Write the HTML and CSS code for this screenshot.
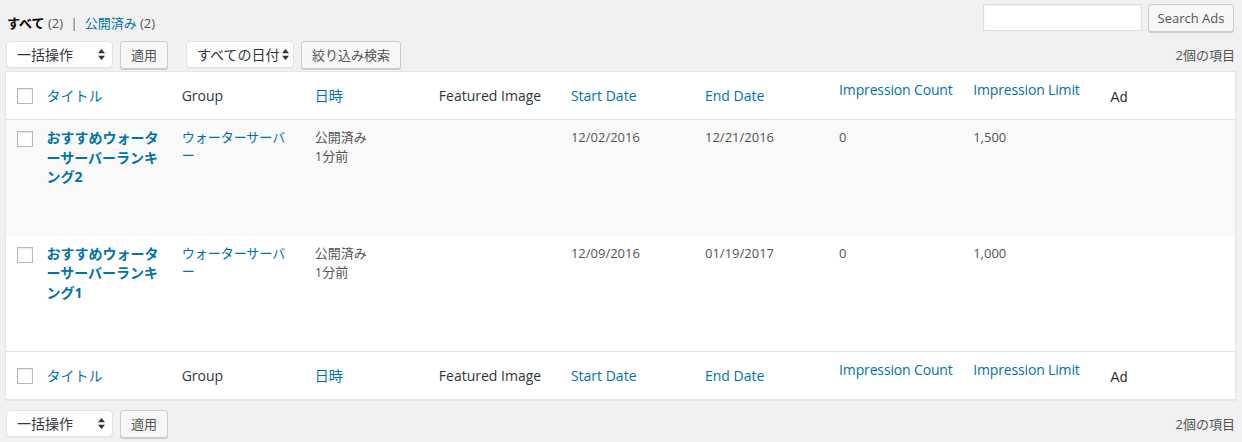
FILE: index.html
```html
<!DOCTYPE html>
<html lang="ja">
<head>
<meta charset="utf-8">
<title>Ads</title>
<link rel="stylesheet" href="styles.css">
</head>
<body>
<div class="top">
  <ul class="subsubsub">
    <li><span class="current">すべて</span> <span class="count">(2)</span> <span class="sep">|</span></li>
    <li><a class="link">公開済み</a> <span class="count">(2)</span></li>
  </ul>
  <div class="search">
    <input class="search-input" type="text">
    <span class="button btn-search">Search Ads</span>
  </div>
</div>

<div class="tablenav">
  <div class="actions">
    <div class="select sel-bulk"><span>一括操作</span><svg class="arr" width="7" height="11" viewBox="0 0 7 11"><path d="M3.5 0L7 4.3H0z M3.5 11L7 6.7H0z" fill="#333"/></svg></div>
    <span class="button">適用</span>
    <div class="select sel-date"><span>すべての日付</span><svg class="arr" width="7" height="11" viewBox="0 0 7 11"><path d="M3.5 0L7 4.3H0z M3.5 11L7 6.7H0z" fill="#333"/></svg></div>
    <span class="button">絞り込み検索</span>
  </div>
  <div class="items">2個の項目</div>
</div>

<table class="widefat">
  <colgroup>
    <col style="width:31px"><col style="width:135px"><col style="width:133px"><col style="width:124px"><col style="width:132px"><col style="width:134px"><col style="width:134px"><col style="width:134px"><col style="width:137px"><col style="width:135px">
  </colgroup>
  <thead>
    <tr>
      <td class="check"><span class="cb"></span></td>
      <th class="link">タイトル</th>
      <th>Group</th>
      <th class="link">日時</th>
      <th>Featured Image</th>
      <th class="link">Start Date</th>
      <th class="link">End Date</th>
      <th class="link top-al">Impression Count</th>
      <th class="link top-al">Impression Limit</th>
      <th class="ad">Ad</th>
    </tr>
  </thead>
  <tbody>
    <tr class="alt">
      <td class="check"><span class="cb"></span></td>
      <td class="title">おすすめウォーターサーバーランキング2</td>
      <td class="grp">ウォーターサーバー</td>
      <td>公開済み<br>1分前</td>
      <td></td>
      <td>12/02/2016</td>
      <td>12/21/2016</td>
      <td>0</td>
      <td>1,500</td>
      <td></td>
    </tr>
    <tr>
      <td class="check"><span class="cb"></span></td>
      <td class="title">おすすめウォーターサーバーランキング1</td>
      <td class="grp">ウォーターサーバー</td>
      <td>公開済み<br>1分前</td>
      <td></td>
      <td>12/09/2016</td>
      <td>01/19/2017</td>
      <td>0</td>
      <td>1,000</td>
      <td></td>
    </tr>
  </tbody>
  <tfoot>
    <tr>
      <td class="check"><span class="cb"></span></td>
      <th class="link">タイトル</th>
      <th>Group</th>
      <th class="link">日時</th>
      <th>Featured Image</th>
      <th class="link">Start Date</th>
      <th class="link">End Date</th>
      <th class="link top-al">Impression Count</th>
      <th class="link top-al">Impression Limit</th>
      <th class="ad">Ad</th>
    </tr>
  </tfoot>
</table>

<div class="tablenav bottom">
  <div class="actions">
    <div class="select sel-bulk"><span>一括操作</span><svg class="arr" width="7" height="11" viewBox="0 0 7 11"><path d="M3.5 0L7 4.3H0z M3.5 11L7 6.7H0z" fill="#333"/></svg></div>
    <span class="button">適用</span>
  </div>
  <div class="items">2個の項目</div>
</div>
</body>
</html>
```

FILE: styles.css
```css
* { box-sizing: border-box; }
html, body { margin: 0; padding: 0; }
body {
  background: #f1f1f1;
  font-family: "Open Sans", "Noto Sans CJK JP", sans-serif;
  font-size: 13px;
  color: #444;
  line-break: loose;
  width: 1242px;
  height: 442px;
  overflow: hidden;
}

.top {
  display: flex;
  justify-content: space-between;
  align-items: flex-start;
  height: 36px;
  padding: 4px 8px 0 7px;
}
.subsubsub {
  list-style: none;
  margin: 10px 0 0;
  padding: 0;
  display: flex;
  gap: 5px;
  line-height: 18px;
  font-size: 13px;
}
.subsubsub .current { color: #000; font-weight: 700; }
.subsubsub .count { color: #555; }
.subsubsub .sep { color: #666; margin: 0 2px 0 4px; }
.link { color: #0073aa; }

.search { display: flex; gap: 6px; align-items: flex-start; }
.search-input {
  width: 159px;
  height: 27px;
  border: 1px solid #ddd;
  background: #fff;
  box-shadow: inset 0 1px 2px rgba(0,0,0,.07);
  margin: 0;
  padding: 0;
  outline: none;
}

.button {
  display: inline-flex;
  align-items: center;
  height: 28px;
  padding: 0 10px 1px;
  background: #f7f7f7;
  border: 1px solid #ccc;
  border-radius: 3px;
  box-shadow: 0 1px 0 #ccc;
  color: #555;
  font-size: 13px;
  white-space: nowrap;
}
.btn-search { width: 86px; justify-content: center; padding: 0 0 1px; }

.tablenav {
  display: flex;
  justify-content: space-between;
  align-items: center;
  height: 28px;
  margin: 4px 0 3px;
  padding: 0 7px 0 6px;
}
.tablenav.bottom { margin-top: 9px; }
.actions { display: flex; align-items: center; }
.actions .button { margin-left: 7px; margin-top: 2px; }
.actions .button + .select { margin-left: 18px; }
.select {
  display: flex;
  align-items: center;
  justify-content: space-between;
  height: 27px;
  background: #fff;
  border: 1px solid #e4e4e4;
  border-radius: 4px;
  box-shadow: 0 1px 1px rgba(0,0,0,.04);
  color: #32373c;
  font-size: 14px;
  padding: 0 7px 0 10px;
  white-space: nowrap;
}
.select .arr { flex: none; }
.sel-bulk { width: 107px; }
.sel-date { width: 108px; padding: 0 4px 0 10px; }
.items { color: #555; font-size: 13px; }

.widefat {
  width: 1231px;
  margin-left: 5px;
  border-collapse: collapse;
  table-layout: fixed;
  background: #fff;
  border: 1px solid #e5e5e5;
  box-shadow: 0 1px 1px rgba(0,0,0,.04);
}
.widefat th, .widefat td {
  text-align: left;
  padding: 8px 10px;
  font-weight: 400;
  vertical-align: top;
}
.widefat thead tr, .widefat tfoot tr { height: 48px; }
.widefat thead th, .widefat tfoot th {
  font-size: 14px;
  line-height: 19px;
  vertical-align: middle;
  color: #32373c;
  padding-top: 0;
  padding-bottom: 0;
  white-space: nowrap;
  overflow: visible;
}
.widefat thead th.link, .widefat tfoot th.link { color: #0073aa; }
.widefat th.top-al { vertical-align: top; padding-top: 8px; letter-spacing: -0.15px; }
.widefat th.ad {
  font-family: "Liberation Sans", Arial, sans-serif;
  font-weight: 400;
  color: #333;
  padding-top: 3px;
}
.widefat thead tr { border-bottom: 1px solid #e1e1e1; }
.widefat tfoot tr { border-top: 1px solid #e1e1e1; }

.widefat td.check { padding: 0 0 0 11px; vertical-align: middle; }
.widefat tbody td.check { vertical-align: top; padding-top: 11px; }
.cb {
  display: block;
  width: 16px;
  height: 16px;
  border: 1px solid #b4b9be;
  background: #fff;
  box-shadow: inset 0 1px 2px rgba(0,0,0,.1);
}

.widefat tbody tr { height: 116px; }
.widefat tbody tr.alt { background: #f9f9f9; }
.widefat tbody td {
  font-size: 13px;
  line-height: 19px;
  color: #555;
  padding-top: 8px;
}
.widefat td.title {
  color: #0073aa;
  font-weight: 700;
  font-size: 14px;
  line-height: 19.5px;
}
.widefat td.grp { color: #0073aa; line-height: 18px; }
```
